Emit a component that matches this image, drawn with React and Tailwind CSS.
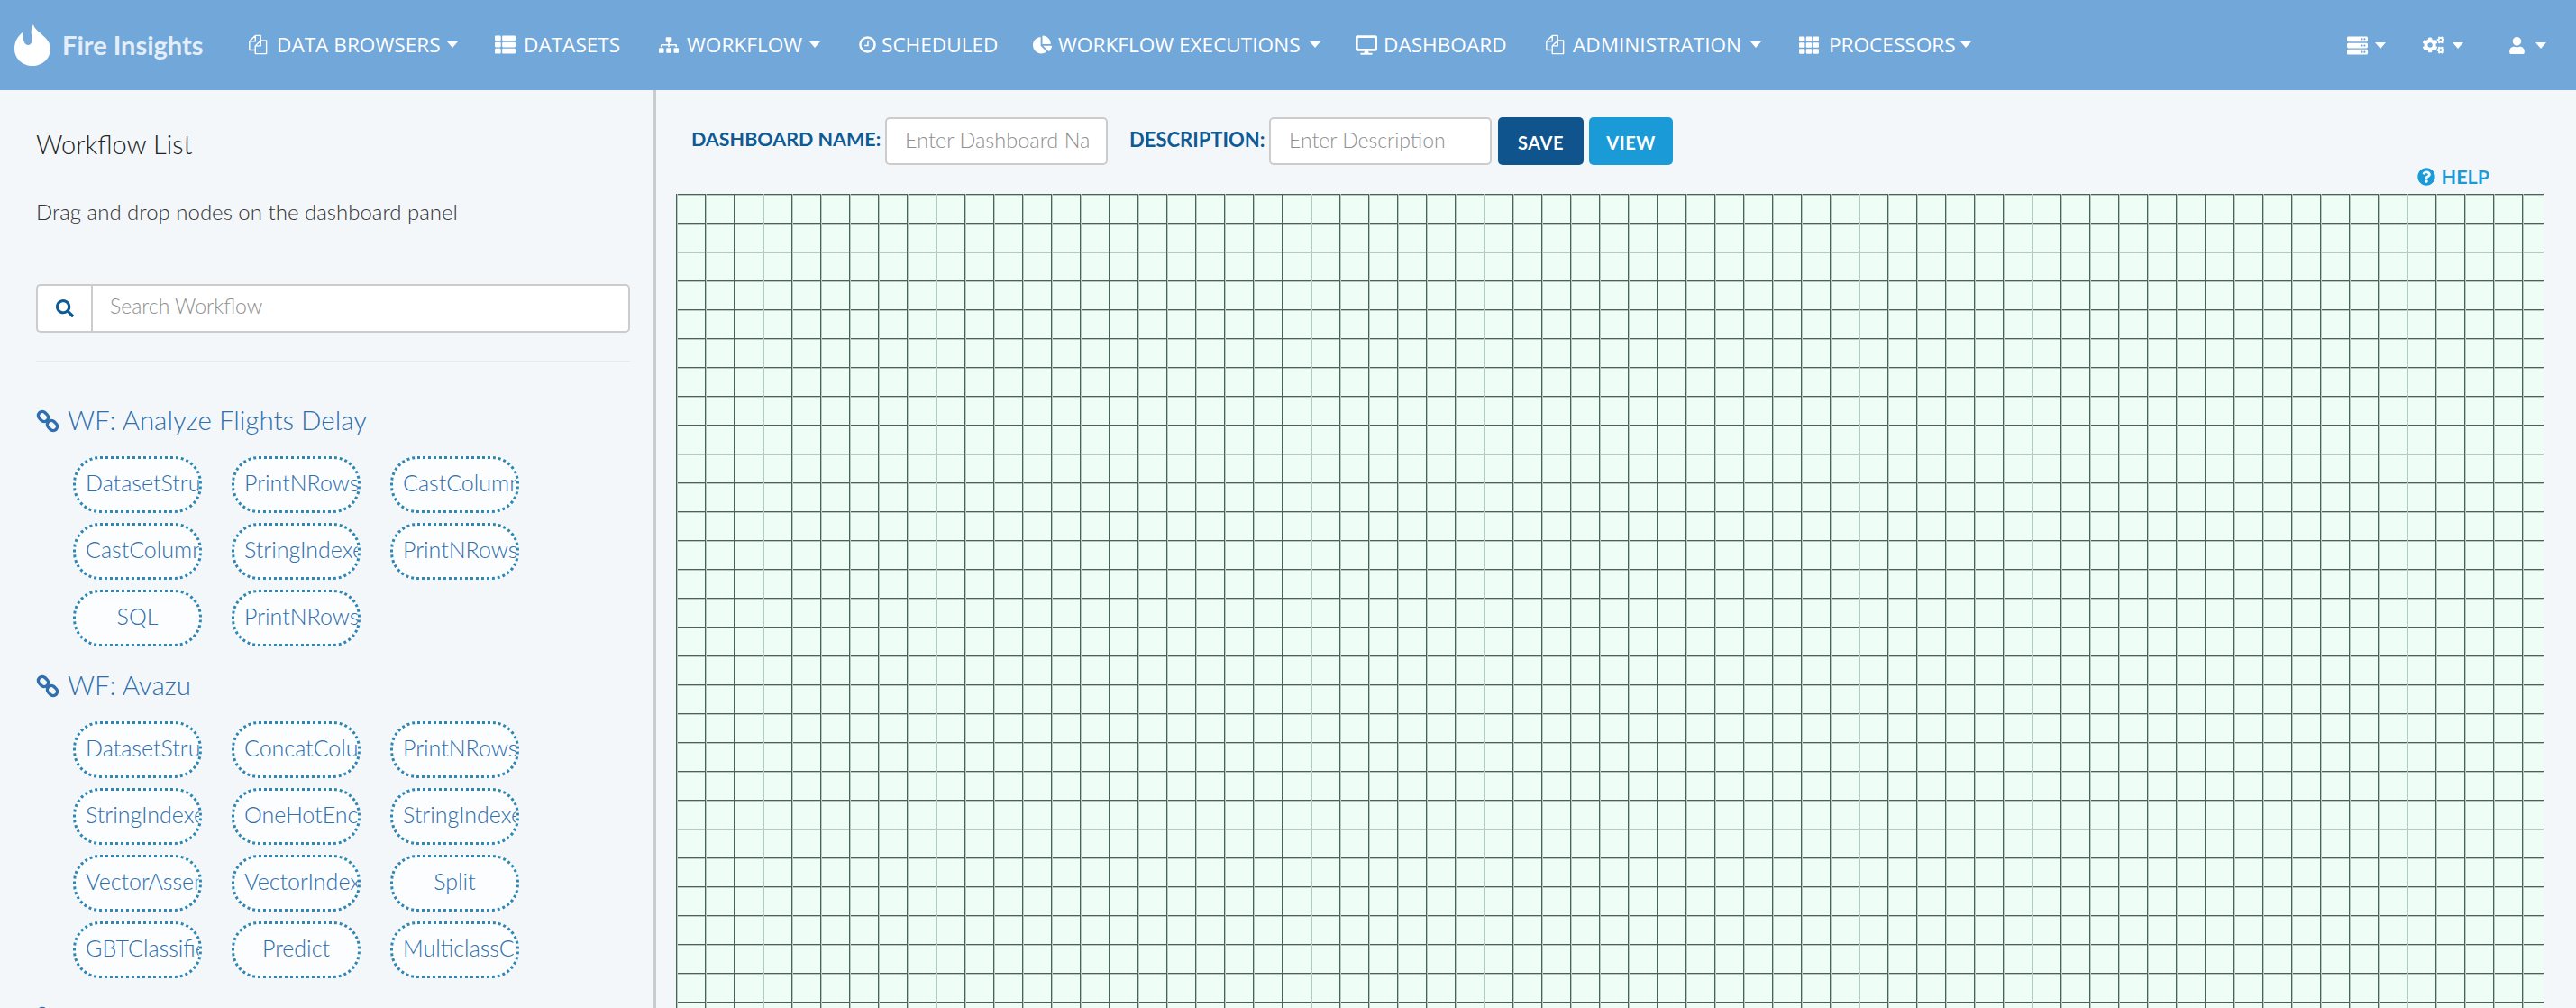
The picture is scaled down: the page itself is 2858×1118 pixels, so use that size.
import React from "react";
import { FaThList, FaSitemap, FaChartPie, FaDesktop, FaTh, FaServer, FaCogs, FaUser, FaSearch, FaQuestionCircle } from "react-icons/fa";

const Caret = ({ className = "" }) => <span className={"inline-block border-x-[6.5px] border-t-[7px] border-x-transparent border-t-white " + className} />;

const FilesIcon = ({ className }) => (
  <svg viewBox="0 0 24 24" className={className} fill="none" stroke="#fff" strokeWidth="1.5" strokeLinejoin="round">
    <path d="M9 1h6.5v6M9 1L2 8v10.5h7M9 1v7H2" />
    <path d="M15.5 7H22.5V23H9V13.5L15.5 7zM15.5 7v6.500H9" />
  </svg>
);

const ClockIcon = ({ className }) => (
  <svg viewBox="0 0 20 20" className={className} fill="none" stroke="#fff">
    <circle cx="10" cy="10" r="8.500" strokeWidth="2.600" />
    <path d="M10.500 5v6H6.500" strokeWidth="1.600" />
  </svg>
);

const LinkIcon = () => (
  <svg viewBox="0 0 26 26" className="h-[26px] w-[26px] shrink-0" fill="none" stroke="#2f6fae" strokeWidth="3.400">
    <rect x="2" y="3.500" width="12" height="9" rx="4.500" transform="rotate(45 8 8)" />
    <rect x="12" y="13.500" width="12" height="9" rx="4.500" transform="rotate(45 18 18)" />
  </svg>
);

const NavItem = ({ icon: Icon, label, caret, iconCls, labelCls, caretCls = "ml-[6px]" }) => (
  <div className="flex items-center text-[22.600px] whitespace-nowrap text-white">
    <Icon className={iconCls} />
    <span className={labelCls}>{label}</span>
    {caret && <Caret className={caretCls} />}
  </div>
);

const Pill = ({ t }) => (
  <div className="h-[63px] w-[143px] overflow-hidden rounded-[30px] border-[3px] border-dotted border-[#2d86b4] bg-[#fbfdfe] px-[11px] text-center text-[25px] leading-[53px] font-light whitespace-nowrap text-[#2f6fae]">
    {t}
  </div>
);

const Group = ({ title, items }) => (
  <div className="mb-[28px]">
    <div className="flex h-[32px] items-center gap-[9px] text-[29.500px] leading-[32px] font-light whitespace-nowrap text-[#2f6fae]">
      <LinkIcon />
      <span className="pb-[3px]">{title}</span>
    </div>
    <div className="mt-[23px] ml-[41px] grid grid-cols-[143px_143px_143px] gap-x-[33px] gap-y-[11px]">
      {items.map((t, i) => <Pill key={i} t={t} />)}
    </div>
  </div>
);

export default function App() {
  return (
    <div className="flex h-screen flex-col overflow-hidden bg-[#f3f7fa] font-['Lato',sans-serif]">
      <header className="flex h-[100px] shrink-0 items-center bg-[#72a7da] font-['Open_Sans',sans-serif]">
        <svg viewBox="0 0 40 46" className="ml-[16px] h-[46px] w-[40px] shrink-0" fill="#fff">
          <path d="M21 0C22 8 40 14 40 27C40 38 31 46 20 46C9 46 0 38 0 27C0 19 4 13 9 9C9 13 10 23 15 23C20 23 20 17 19 12C18 7 19 3 21 0Z" />
        </svg>
        <span className="ml-[13px] w-[159px] font-['Lato',sans-serif] text-[29px] font-bold whitespace-nowrap text-[#e4eef8]">Fire Insights</span>
        <NavItem icon={FilesIcon} label="DATA BROWSERS" caret iconCls="ml-[47px] h-[23px] w-[22px]" labelCls="ml-[10px] w-[183px]" />
        <NavItem icon={FaThList} label="DATASETS" iconCls="ml-[41px] h-[23px] w-[23px]" labelCls="ml-[9px] w-[108px]" />
        <NavItem icon={FaSitemap} label="WORKFLOW" caret iconCls="ml-[42px] h-[22px] w-[22px]" labelCls="ml-[9px] w-[130px]" />
        <NavItem icon={ClockIcon} label="SCHEDULED" iconCls="ml-[43px] h-[19px] w-[19px]" labelCls="ml-[6px] w-[129px]" />
        <NavItem icon={FaChartPie} label="WORKFLOW EXECUTIONS" caret iconCls="ml-[39px] h-[21px] w-[21px]" labelCls="ml-[7px] w-[272px]" caretCls="ml-[7px]" />
        <NavItem icon={FaDesktop} label="DASHBOARD" iconCls="ml-[39px] h-[24px] w-[24px]" labelCls="ml-[7px] w-[136px]" />
        <NavItem icon={FilesIcon} label="ADMINISTRATION" caret iconCls="ml-[43px] h-[23px] w-[22px]" labelCls="ml-[9px] w-[191px]" />
        <NavItem icon={FaTh} label="PROCESSORS" caret iconCls="ml-[42px] h-[22px] w-[22px]" labelCls="ml-[11px] w-[139px]" caretCls="ml-[7px]" />
        <div className="ml-auto flex items-center pr-[33px]">
          <FaServer className="h-[23px] w-[23px] text-white" /><Caret className="ml-[8px]" />
          <FaCogs className="ml-[41px] h-[24px] w-[24px] text-white" /><Caret className="ml-[9px]" />
          <FaUser className="ml-[50px] h-[19px] w-[19px] text-white" /><Caret className="ml-[11px]" />
        </div>
      </header>
      <div className="flex min-h-0 flex-1">
        <aside className="w-[728px] shrink-0 overflow-hidden border-r-[4px] border-[#c9ccce] pt-[45px] pr-[25px] pl-[40px]">
          <h2 className="text-[29px] leading-[30px] font-light text-[#222]">Workflow List</h2>
          <p className="mt-[45px] text-[24px] leading-[30px] font-light whitespace-nowrap text-[#333]">Drag and drop nodes on the dashboard panel</p>
          <div className="mt-[65px] flex h-[54px]">
            <div className="flex w-[61px] items-center justify-center rounded-l-[5px] border-2 border-r-0 border-[#ccc] bg-white">
              <FaSearch className="h-[20px] w-[20px] text-[#0f5a93]" />
            </div>
            <div className="flex flex-1 items-center rounded-r-[5px] border-2 border-[#ccc] bg-white pb-[6px] pl-[19px] text-[23px] font-light text-[#8f8f8f]">Search Workflow</div>
          </div>
          <div className="mt-[31px] mb-[50px] h-px bg-[#e6e9ec]" />
          <Group title="WF: Analyze Flights Delay" items={["DatasetStructured", "PrintNRows", "CastColumnType", "CastColumnType", "StringIndexer", "PrintNRows", "SQL", "PrintNRows"]} />
          <Group title="WF: Avazu" items={["DatasetStructured", "ConcatColumns", "PrintNRows", "StringIndexer", "OneHotEncoder", "StringIndexer", "VectorAssembler", "VectorIndexer", "Split", "GBTClassifier", "Predict", "MulticlassClassification"]} />
          <Group title="WF: Churn Analysis" items={[]} />
        </aside>
        <main className="min-w-0 flex-1 pt-[30px] pr-[36px] pl-[22px]">
          <div className="flex h-[53px] items-center pl-[17px]">
            <span className="w-[209px] pb-[4px] text-[21.500px] font-bold whitespace-nowrap text-[#0f5a93]">DASHBOARD NAME:</span>
            <div className="ml-[6px] flex h-[53px] w-[247px] items-center overflow-hidden rounded-[5px] border-2 border-[#ccc] bg-white pb-[2px] pl-[20px] text-[23.500px] font-light whitespace-nowrap text-[#8f8f8f]">Enter Dashboard Na</div>
            <span className="ml-[24px] w-[149px] pb-[4px] text-[22px] font-bold whitespace-nowrap text-[#0f5a93]">DESCRIPTION:</span>
            <div className="ml-[6px] flex h-[53px] w-[247px] items-center rounded-[5px] border-2 border-[#ccc] bg-white pb-[2px] pl-[20px] text-[23px] font-light text-[#8f8f8f]">Enter Description</div>
            <div className="ml-[7px] flex h-[53px] w-[95px] items-center justify-center rounded-[5px] bg-[#0f548c] pt-[2px] text-[20px] font-bold tracking-[0.5px] text-white">SAVE</div>
            <div className="ml-[6px] flex h-[53px] w-[93px] items-center justify-center rounded-[5px] bg-[#1b9ad8] pt-[2px] text-[20px] font-bold tracking-[0.5px] text-white">VIEW</div>
          </div>
          <div className="flex h-[32px] items-center justify-end pr-[60px] pb-[6px] text-[21.500px] font-bold text-[#1b9ad8]">
            <FaQuestionCircle className="mr-[7px] h-[20px] w-[20px]" />HELP
          </div>
          <div className="h-[903px] bg-[#eefdf6] bg-[linear-gradient(to_right,#4a6358_1px,#b8c9c0_1px,#b8c9c0_2px,transparent_2px),linear-gradient(to_bottom,#4a6358_1px,#b8c9c0_1px,#b8c9c0_2px,transparent_2px)] bg-[length:32px_32px]" />
        </main>
      </div>
    </div>
  );
}
